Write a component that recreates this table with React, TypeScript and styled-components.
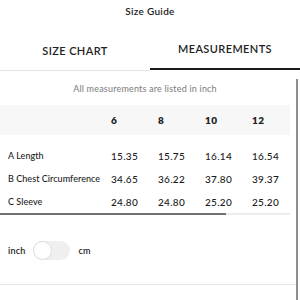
import { useState } from 'react';
import styled, { createGlobalStyle } from 'styled-components';

const GlobalStyle = createGlobalStyle`
    * { box-sizing: border-box; }
    body {
        margin: 0;
        background: #ffffff;
        font-family: Lato, "Open Sans", sans-serif;
        color: #222222;
    }
`;

const Page = styled.div`
    width: 300px;
    height: 300px;
    overflow: hidden;
    display: flex;
    flex-direction: column;
`;

const Title = styled.div`
    height: 22px;
    display: flex;
    align-items: center;
    justify-content: center;
    font-size: 10px;
    font-weight: 600;
    letter-spacing: 0.3px;
`;

const Tabs = styled.div`
    display: flex;
`;

const Tab = styled.button<{ $active: boolean }>`
    flex: 1;
    height: 48px;
    padding: 7px 0 0;
    background: none;
    border: none;
    border-bottom: ${p => (p.$active ? '2px solid #1a1a1a' : '1px solid #e4e4e4')};
    margin-top: ${p => (p.$active ? '0' : '1px')};
    font-family: inherit;
    font-size: 11px;
    font-weight: 600;
    letter-spacing: 0.4px;
    color: #222222;
    cursor: pointer;
`;

const Body = styled.div`
    flex: 1;
    display: flex;
`;

const Content = styled.div`
    flex: 1;
    padding-right: 6px;
`;

const VScroll = styled.div`
    width: 2px;
    margin: 8px 2px 0 0;
    background: #8e8e8e;
`;

const Note = styled.div`
    height: 34px;
    display: flex;
    align-items: center;
    justify-content: center;
    font-size: 9px;
    color: #7a7a7a;
    letter-spacing: 0.2px;
    padding-top: 1px;
`;

const Grid = styled.div`
    display: grid;
    grid-template-columns: 111px 47px 47px 47px 1fr;
`;

const HeadCell = styled.div`
    height: 30px;
    display: flex;
    align-items: center;
    background: #f7f7f7;
    font-size: 10px;
    font-weight: 800;
    letter-spacing: 0.4px;
`;

const Cell = styled.div<{ $first?: boolean; $label?: boolean }>`
    height: 23px;
    margin-top: ${p => (p.$first ? '9px' : '0')};
    display: flex;
    align-items: center;
    padding-left: ${p => (p.$label ? '8px' : '0')};
    font-size: ${p => (p.$label ? '9px' : '10px')};
    font-weight: 500;
    color: #1c1c1c;
    letter-spacing: ${p => (p.$label ? '0.05px' : '0.3px')};
    white-space: nowrap;
`;

const HScroll = styled.div`
    height: 2px;
    background: #ececec;
`;

const HThumb = styled.div`
    height: 100%;
    background: #707070;
`;

const UnitRow = styled.div`
    height: 70px;
    display: flex;
    align-items: center;
    gap: 8px;
    padding: 2px 0 0 8px;
    border-bottom: 1px solid #e6e6e6;
    margin-right: -6px;
`;

const UnitLabel = styled.span`
    font-size: 9px;
    font-weight: 600;
    letter-spacing: 0.2px;
`;

const Switch = styled.button<{ $on: boolean }>`
    width: 37px;
    height: 19px;
    padding: 0;
    border: none;
    border-radius: 10px;
    background: #efefef;
    display: flex;
    justify-content: ${p => (p.$on ? 'flex-end' : 'flex-start')};
    cursor: pointer;
`;

const Knob = styled.span`
    width: 19px;
    height: 19px;
    border-radius: 50%;
    background: #ffffff;
    border: 1px solid #dddddd;
`;

const sizes = ['6', '8', '10', '12'];
const rows = [
    { label: 'A Length', values: ['15.35', '15.75', '16.14', '16.54'] },
    { label: 'B Chest Circumference', values: ['34.65', '36.22', '37.80', '39.37'] },
    { label: 'C Sleeve', values: ['24.80', '24.80', '25.20', '25.20'] },
];

const App = () => {
    const [tab, setTab] = useState('measurements');
    const [cm, setCm] = useState(false);

    return (
        <Page>
            <GlobalStyle />
            <Title>Size Guide</Title>
            <Tabs>
                <Tab $active={tab === 'chart'} onClick={() => setTab('chart')}>SIZE CHART</Tab>
                <Tab $active={tab === 'measurements'} onClick={() => setTab('measurements')}>MEASUREMENTS</Tab>
            </Tabs>
            <Body>
                <Content>
                    <Note>All measurements are listed in {cm ? 'cm' : 'inch'}</Note>
                    <Grid>
                        <HeadCell />
                        {sizes.map(s => <HeadCell key={s}>{s}</HeadCell>)}
                        {rows.map((r, i) => [
                            <Cell key={r.label} $label $first={i === 0}>{r.label}</Cell>,
                            ...r.values.map((v, j) => (
                                <Cell key={r.label + j} $first={i === 0}>{v}</Cell>
                            )),
                        ])}
                    </Grid>
                    <HScroll>
                        <HThumb style={{ width: '78%' }} />
                    </HScroll>
                    <UnitRow>
                        <UnitLabel>inch</UnitLabel>
                        <Switch $on={cm} onClick={() => setCm(!cm)}>
                            <Knob />
                        </Switch>
                        <UnitLabel>cm</UnitLabel>
                    </UnitRow>
                </Content>
                <VScroll />
            </Body>
        </Page>
    );
};

export default App;
